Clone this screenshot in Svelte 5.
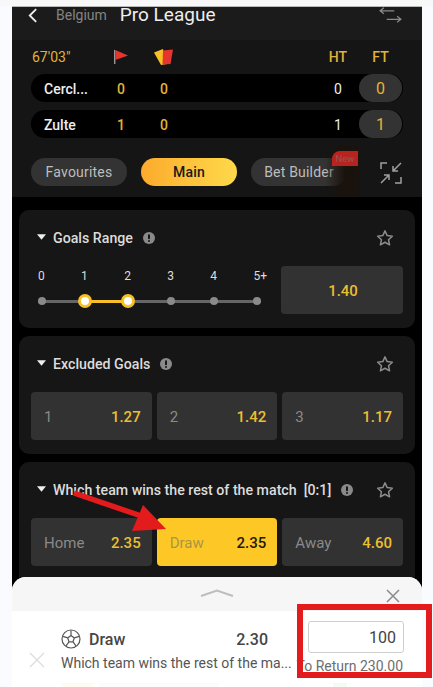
<script>
	const rows = [
		{ team: 'Cercl...', corners: 0, cards: 0, ht: 0, ft: 0 },
		{ team: 'Zulte', corners: 1, cards: 0, ht: 1, ft: 1 }
	];
	const ticks = ['0', '1', '2', '3', '4', '5+'];
	const excluded = [
		{ label: '1', odds: '1.27' },
		{ label: '2', odds: '1.42' },
		{ label: '3', odds: '1.17' }
	];
	const rest = [
		{ label: 'Home', odds: '2.35' },
		{ label: 'Draw', odds: '2.35', selected: true },
		{ label: 'Away', odds: '4.60' }
	];
</script>

{#snippet star()}
	<svg class="star" viewBox="0 0 24 24" width="18" height="18" fill="none" stroke="#8c8c8c" stroke-width="2" stroke-linejoin="round">
		<path d="M12 2.5l2.9 6.3 6.9.8-5.1 4.7 1.4 6.8-6.1-3.4-6.1 3.4 1.4-6.8-5.1-4.7 6.9-.8z" />
	</svg>
{/snippet}

{#snippet info()}
	<svg class="info" viewBox="0 0 12 12" width="12" height="12">
		<circle cx="6" cy="6" r="6" fill="#8a8a8a" />
		<rect x="5" y="2.2" width="2" height="5" rx="1" fill="#161616" />
		<circle cx="6" cy="9" r="1" fill="#161616" />
	</svg>
{/snippet}

{#snippet caret()}
	<svg class="caret" viewBox="0 0 10 6" width="9" height="6"><path d="M0 0h10L5 6z" fill="#eee" /></svg>
{/snippet}

<div class="page">
	<div class="phone">
		<header class="titlebar">
			<svg class="back" viewBox="0 0 12 16" width="11" height="15" fill="none" stroke="#eee" stroke-width="2"><path d="M10 1L3 8l7 7" /></svg>
			<span class="country">Belgium</span>
			<span class="league">Pro League</span>
			<svg class="swap" viewBox="0 0 24 18" width="23" height="17" fill="none" stroke="#8a8a8a" stroke-width="1.3">
				<path d="M1 4h15M5 .8L1 4l4 3.2M8 13h15M19 9.8l4 3.2-4 3.2" />
			</svg>
		</header>

		<section class="score">
			<div class="score-head">
				<span class="clock">67'03"</span>
				<span class="col corners">
					<svg viewBox="0 0 14 14" width="14" height="14">
						<rect x="0" y="0" width="1.4" height="14" fill="#999" />
						<path d="M1.4 0L14 5.5 1.4 10z" fill="#e5352e" />
					</svg>
				</span>
				<span class="col cards">
					<svg viewBox="0 0 20 16" width="20" height="16">
						<path d="M0 3.500L9 0l4 15-6 1z" fill="#f6c026" />
						<path d="M9 1.500L19 .5 16.500 15 8.500 15.500z" fill="#e5352e" />
					</svg>
				</span>
				<span class="col ht">HT</span>
				<span class="col ft">FT</span>
			</div>
			{#each rows as row}
				<div class="score-row">
					<span class="team">{row.team}</span>
					<span class="col corners gold">{row.corners}</span>
					<span class="col cards gold">{row.cards}</span>
					<span class="col ht">{row.ht}</span>
					<span class="ft-pill">{row.ft}</span>
				</div>
			{/each}
			<div class="tabs">
				<button class="tab">Favourites</button>
				<button class="tab main">Main</button>
				<div class="builder">
					<button class="tab">Bet Builder</button>
					<span class="shade"></span>
					<span class="new">New</span>
				</div>
				<svg class="collapse" viewBox="0 0 22 22" width="22" height="22" fill="none" stroke="#a0a0a0" stroke-width="1.5">
					<path d="M1 7V1h6M21 15v6h-6M21 1l-8 8M13 4v5h5M1 21l8-8M4 13h5v5" />
				</svg>
			</div>
		</section>

		<div class="markets">
			<section class="card">
				<div class="card-head">
					{@render caret()}
					<span class="card-title">Goals Range</span>
					{@render info()}
					{@render star()}
				</div>
				<div class="range-row">
					<div class="range">
						<div class="ticks">
							{#each ticks as t}<span>{t}</span>{/each}
						</div>
						<div class="track">
							<span class="fill"></span>
							{#each ticks as t, i}
								<span class="dot" class:on={i === 1 || i === 2}></span>
							{/each}
						</div>
					</div>
					<button class="cell range-odds"><span class="odds">1.40</span></button>
				</div>
			</section>

			<section class="card">
				<div class="card-head">
					{@render caret()}
					<span class="card-title">Excluded Goals</span>
					{@render info()}
					{@render star()}
				</div>
				<div class="cells">
					{#each excluded as c}
						<button class="cell"><span class="label">{c.label}</span><span class="odds">{c.odds}</span></button>
					{/each}
				</div>
			</section>

			<section class="card">
				<div class="card-head">
					{@render caret()}
					<span class="card-title">Which team wins the rest of the match&nbsp; [0:1]</span>
					{@render info()}
					{@render star()}
				</div>
				<div class="cells">
					{#each rest as c}
						<button class="cell" class:selected={c.selected}><span class="label">{c.label}</span><span class="odds">{c.odds}</span></button>
					{/each}
				</div>
			</section>
		</div>

		<aside class="sheet">
			<div class="sheet-bar">
				<svg class="chev" viewBox="0 0 34 8" width="34" height="8" fill="none" stroke="#bdbdbd" stroke-width="2"><path d="M1 7l16-5.500L33 7" /></svg>
				<svg class="close" viewBox="0 0 14 14" width="14" height="14" fill="none" stroke="#8e8e8e" stroke-width="1.6"><path d="M1 1l12 12M13 1L1 13" /></svg>
			</div>
			<div class="bet">
				<svg class="remove" viewBox="0 0 16 16" width="16" height="16" fill="none" stroke="#dcdcdc" stroke-width="1.2"><path d="M1 1l14 14M15 1L1 15" /></svg>
				<div class="bet-main">
					<div class="bet-top">
						<svg class="ball" viewBox="0 0 20 20" width="20" height="20" fill="none" stroke="#555" stroke-width="1.2">
							<circle cx="10" cy="10" r="9" />
							<path d="M10 6.500l3.300 2.400-1.300 3.900H8l-1.300-3.900zM10 6.500V1.500M13.300 8.900l4.800-1.500M12 12.800l3 4M8 12.800l-3 4M6.700 8.900L1.900 7.400" />
						</svg>
						<span class="pick">Draw</span>
						<span class="price">2.30</span>
					</div>
					<div class="market-name">Which team wins the rest of the ma...</div>
				</div>
				<div class="stake">
					<input class="stake-input" value="100" />
					<div class="return">To Return 230.00</div>
				</div>
			</div>
			<div class="next-bet">
				<span class="live"></span>
				<span class="next-text"></span>
				<span class="next-odds"></span>
			</div>
		</aside>
	</div>

	<!-- annotation drawn over the screenshot -->
	<svg class="arrow" viewBox="0 0 433 687" width="433" height="687">
		<path d="M74 493L150 519" stroke="#e31b1c" stroke-width="5.500" fill="none" />
		<path d="M143 505L166 529L132 531z" fill="#e31b1c" />
	</svg>
	<div class="redbox"></div>
</div>

<style>
	:global(body) {
		background: #fafbff;
	}
	.page {
		position: relative;
		width: 433px;
		height: 687px;
		overflow: hidden;
		padding: 6px 0 0 12px;
		box-sizing: border-box;
		font-family: Roboto, 'Liberation Sans', sans-serif;
		background: linear-gradient(#f8f8f8 6px, #fafbff 6px);
	}
	.phone {
		position: relative;
		width: 410px;
		height: 681px;
		background: #000;
		border-top: 1px solid #b9b9b9;
		box-sizing: border-box;
	}
	button {
		border: none;
		font-family: inherit;
		padding: 0;
	}
	.titlebar {
		display: flex;
		align-items: flex-start;
		height: 33px;
		background: #1b1b1b;
	}
	.back {
		margin: 1px 0 0 15px;
	}
	.country {
		margin-left: 18px;
		font-size: 14px;
		line-height: 16px;
		color: #848484;
	}
	.league {
		margin-left: 13px;
		font-size: 19px;
		line-height: 15px;
		color: #eee;
	}
	.swap {
		margin-left: auto;
		margin-right: 20px;
	}
	.score {
		height: 157px;
		background: #151515;
		padding: 8px 19px 0;
		box-sizing: border-box;
	}
	.score-head,
	.score-row {
		display: flex;
		align-items: center;
		width: 372px;
	}
	.score-head {
		height: 18px;
		margin-bottom: 8px;
		font-size: 14px;
		font-weight: 500;
		color: #e2b23a;
	}
	.clock {
		width: 80px;
		padding-left: 1px;
		font-weight: 400;
		box-sizing: border-box;
	}
	.col {
		display: flex;
		justify-content: center;
		align-items: center;
	}
	.corners {
		width: 20px;
	}
	.cards {
		width: 24px;
		margin-left: 21px;
	}
	.ht {
		width: 24px;
		margin-left: 150px;
	}
	.ft {
		width: 43px;
		margin-left: 9px;
	}
	.score-row {
		height: 28px;
		margin-bottom: 8px;
		background: #000;
		border-radius: 14px;
		font-size: 14px;
		font-weight: 500;
		color: #eee;
	}
	.team {
		width: 80px;
		padding: 1px 0 0 13px;
		box-sizing: border-box;
	}
	.score-row .col {
		padding-top: 1px;
	}
	.score-row .ht {
		font-weight: 400;
	}
	.gold {
		color: #e2b23a;
	}
	.ft-pill {
		width: 43px;
		height: 28px;
		margin-left: 9px;
		border-radius: 14px;
		background: #333;
		color: #e2b23a;
		display: flex;
		align-items: center;
		justify-content: center;
		font-size: 16px;
		font-weight: 400;
	}
	.tabs {
		display: flex;
		align-items: center;
		gap: 14px;
		margin-top: 20px;
	}
	.tab {
		width: 96px;
		height: 28px;
		border-radius: 14px;
		background: #333;
		color: #bdbdbd;
		font-size: 14px;
		letter-spacing: 0.2px;
	}
	.tab.main {
		background: linear-gradient(90deg, #fcab2c, #ffd94a);
		color: #1a1a1a;
		font-weight: 500;
	}
	.builder {
		position: relative;
		width: 96px;
		height: 28px;
	}
	.shade {
		position: absolute;
		left: 74px;
		top: -12px;
		width: 34px;
		height: 51px;
		background: linear-gradient(90deg, rgba(21, 15, 10, 0), #1a120c 60%);
	}
	.new {
		position: absolute;
		left: 81px;
		top: -7px;
		width: 26px;
		height: 15px;
		background: #b8231f;
		border-radius: 8px 0 0 0;
		color: #8f5a50;
		font-size: 9.500px;
		line-height: 15px;
		text-align: center;
	}
	.collapse {
		margin-left: 19px;
		margin-top: 1px;
	}
	.markets {
		display: flex;
		flex-direction: column;
		gap: 8px;
		padding: 13px 7px 0;
	}
	.card {
		background: #161616;
		border-radius: 10px;
		padding: 0 12px;
		height: 118px;
		flex: none;
	}
	.card:nth-child(3) {
		height: 130px;
	}
	.card-head {
		display: flex;
		align-items: center;
		height: 55px;
		padding: 0 9px 1px 6px;
	}
	.caret {
		margin-right: 7px;
		margin-top: -1px;
	}
	.card-title {
		font-size: 14.200px;
		font-weight: 500;
		color: #dcdcdc;
		margin-right: 10px;
	}
	.star {
		margin-left: auto;
	}
	.range-row {
		display: flex;
		justify-content: space-between;
		height: 48px;
	}
	.range {
		width: 230px;
		padding-left: 7px;
		box-sizing: border-box;
	}
	.ticks {
		display: flex;
		justify-content: space-between;
		width: 229px;
		font-size: 12px;
		line-height: 16px;
		color: #ddd;
		padding-top: 2px;
	}
	.track {
		position: relative;
		display: flex;
		justify-content: space-between;
		align-items: center;
		width: 223px;
		height: 14px;
		margin-top: 10px;
		background: linear-gradient(#666, #666) center / 100% 3px no-repeat;
	}
	.fill {
		position: absolute;
		left: 47px;
		width: 43px;
		height: 3px;
		background: #f6c026;
	}
	.dot {
		position: relative;
		width: 8px;
		height: 8px;
		border-radius: 50%;
		background: #8a8a8a;
	}
	.dot.on {
		background: #fff;
		box-shadow: 0 0 0 3px #f6c026;
	}
	.cell {
		flex: 1;
		height: 48px;
		border-radius: 4px;
		background: #323232;
		display: flex;
		align-items: center;
		justify-content: space-between;
		padding: 2px 11px 0 13px;
		box-sizing: border-box;
		font-size: 15px;
	}
	.range-odds {
		flex: none;
		width: 122px;
		justify-content: center;
	}
	.cells {
		display: flex;
		gap: 5px;
	}
	.label {
		color: #8a8a8a;
	}
	.odds {
		color: #ebbf30;
		font-weight: 500;
	}
	.cell.selected {
		background: #fdc826;
	}
	.selected .label {
		color: #a89548;
	}
	.selected .odds {
		color: #1f1a08;
	}
	.sheet {
		position: absolute;
		left: 0;
		right: 0;
		bottom: 0;
		height: 110px;
		border-radius: 14px 14px 0 0;
		background: #fff;
		overflow: hidden;
	}
	.sheet-bar {
		height: 34px;
		background: #f6f6f6;
		position: relative;
		display: flex;
		justify-content: center;
		padding-top: 12px;
		box-sizing: border-box;
	}
	.close {
		position: absolute;
		right: 22px;
		top: 12px;
	}
	.bet {
		display: flex;
		position: relative;
		height: 62px;
		padding-left: 17px;
	}
	.remove {
		margin-top: 41px;
	}
	.bet-main {
		width: 232px;
		margin-left: 16px;
		margin-top: 18px;
	}
	.bet-top {
		display: flex;
		align-items: center;
		height: 20px;
	}
	.pick {
		margin-left: 8px;
		font-size: 16px;
		font-weight: 500;
		color: #454545;
	}
	.price {
		margin-left: auto;
		margin-right: 25px;
		font-size: 16px;
		font-weight: 500;
		color: #454545;
	}
	.market-name {
		margin-top: 6px;
		font-size: 14px;
		line-height: 16px;
		color: #555;
		white-space: nowrap;
	}
	.stake {
		position: absolute;
		right: 18px;
		top: 10px;
		width: 96px;
	}
	.stake-input {
		display: block;
		width: 96px;
		height: 32px;
		box-sizing: border-box;
		border: 1px solid #cfcfcf;
		border-radius: 3px;
		padding: 0 7px;
		text-align: right;
		font-family: inherit;
		font-size: 16px;
		color: #444;
		outline: none;
	}
	.return {
		position: absolute;
		right: 1px;
		top: 37px;
		white-space: nowrap;
		font-size: 14px;
		line-height: 16px;
		color: #6e6e6e;
	}
	.next-bet {
		display: flex;
		padding: 10px 0 0 50px;
		gap: 6px;
	}
	.live {
		width: 31px;
		height: 12px;
		background: #fefcf0;
	}
	.next-text {
		width: 120px;
		height: 12px;
		background: #fcfcfc;
	}
	.next-odds {
		width: 14px;
		height: 12px;
		margin-left: 108px;
		background: #f4faf4;
	}
	.arrow {
		position: absolute;
		left: 0;
		top: 0;
		pointer-events: none;
	}
	.redbox {
		position: absolute;
		left: 297px;
		top: 604px;
		width: 135px;
		height: 74px;
		box-sizing: border-box;
		border: 6px solid #e31b1c;
		pointer-events: none;
	}
</style>
